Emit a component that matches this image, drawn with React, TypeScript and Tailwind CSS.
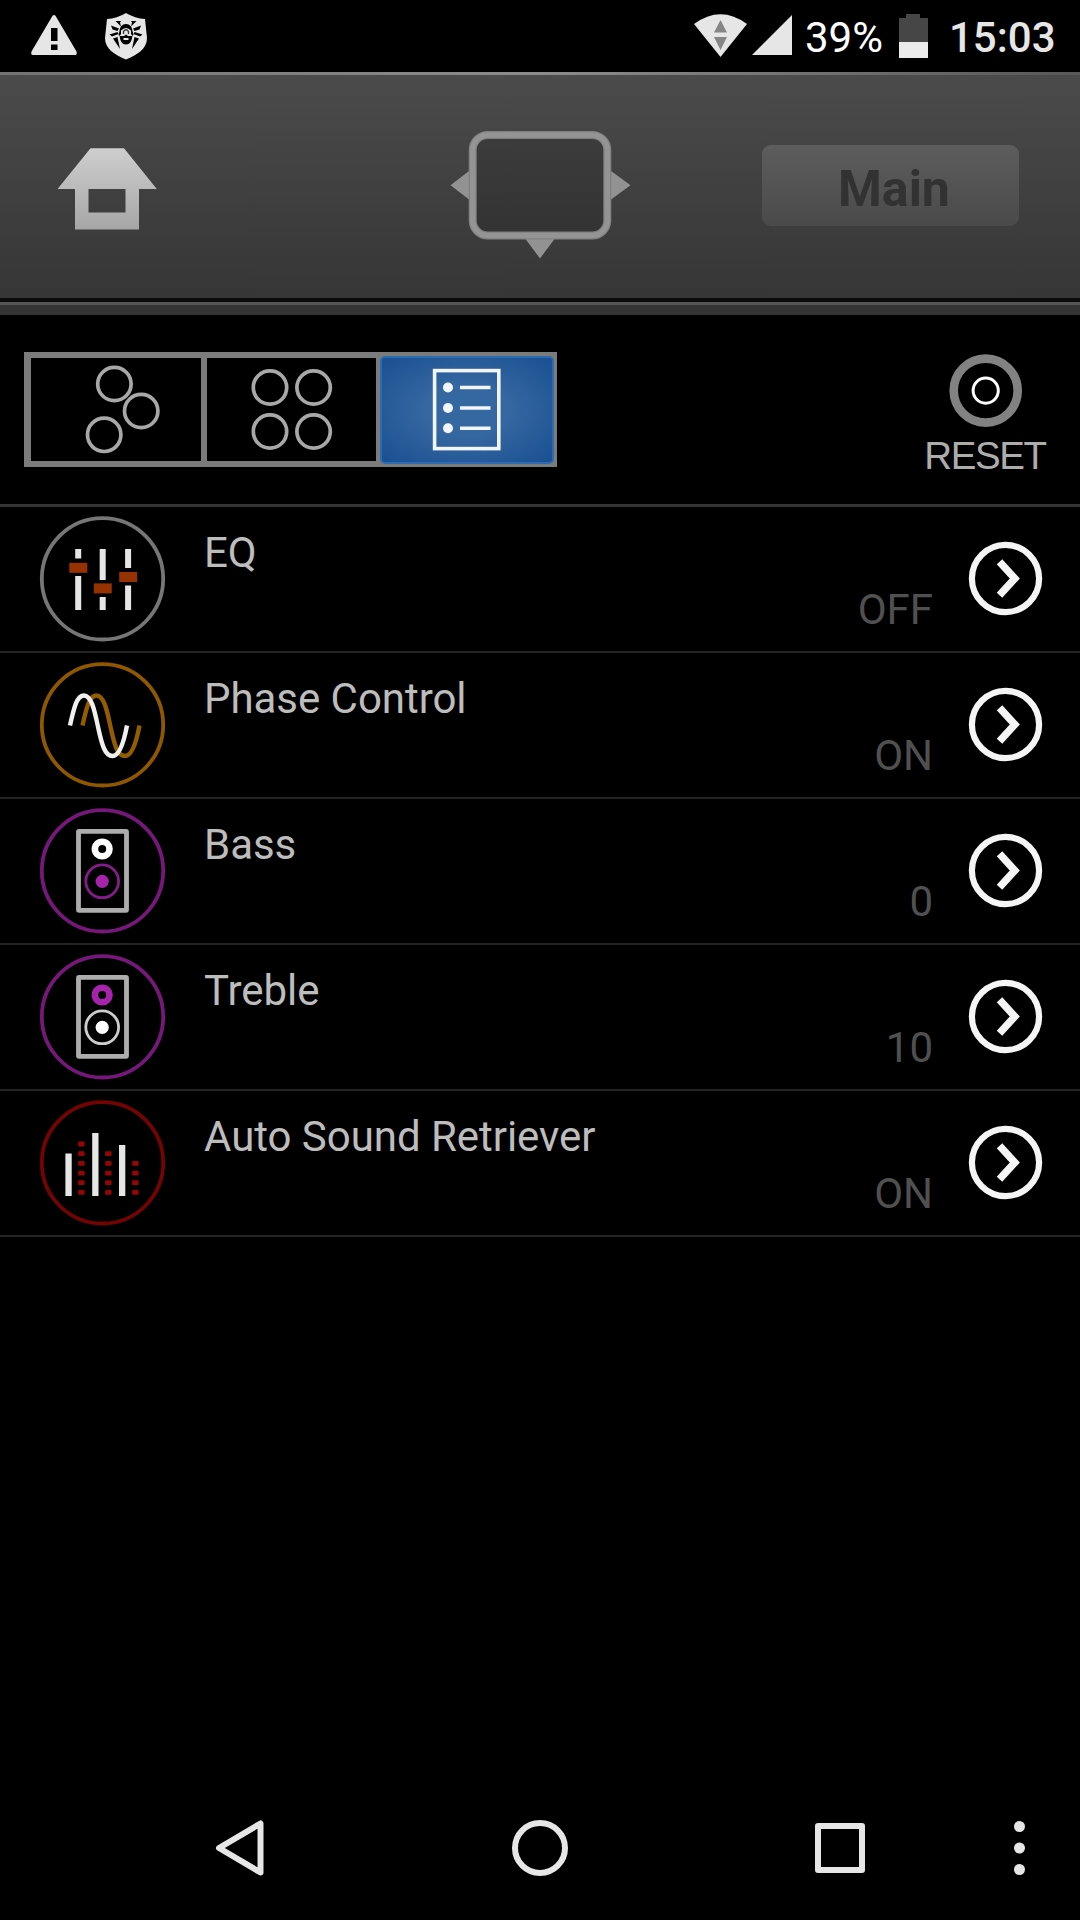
import React, { useState } from 'react';

const ring = 'fill-none [stroke-width:3.8]';

const EqIcon = () => (
  <svg width="128" height="128" viewBox="0 0 128 128">
    <circle cx="64.5" cy="63.8" r="60.7" className={`${ring} stroke-[#767676]`} />
    <g fill="#e6e6e6">
      <rect x="37.2" y="34" width="6" height="9.5" />
      <rect x="37.2" y="61" width="6" height="34" />
      <rect x="61.7" y="34" width="6" height="31" />
      <rect x="61.7" y="82" width="6" height="13" />
      <rect x="87.1" y="34" width="6" height="19" />
      <rect x="87.1" y="70.5" width="6" height="24.5" />
    </g>
    <g fill="#963200">
      <rect x="31.3" y="47.8" width="18" height="10" />
      <rect x="55.8" y="68.4" width="18" height="10" />
      <rect x="81.2" y="57" width="18" height="10" />
    </g>
  </svg>
);

const PhaseIcon = () => (
  <svg width="128" height="128" viewBox="0 0 128 128" fill="none" strokeWidth="4.4">
    <circle cx="64.5" cy="63.8" r="60.7" className={`${ring} stroke-[#8f5800]`} />
    <path stroke="#945c00" d="M44.5 64.5C48.5 46 51.5 34.5 58.5 34.5C66.5 34.5 69.5 52 73 68C76.5 84 79.5 95 87 95C93.5 95 98 83 101.5 64.5" />
    <path stroke="#f0f0f0" d="M32 64.5C36 46 39 34.5 46 34.5C54 34.5 57 52 60.5 68C64 84 67 95 74.5 95C81 95 85.5 83 89 64.5" />
  </svg>
);

const SpeakerIcon = ({ top, bottom }: { top: string; bottom: string }) => (
  <svg width="128" height="128" viewBox="0 0 128 128" fill="none">
    <circle cx="64.5" cy="63.8" r="60.7" className={`${ring} stroke-[#76187a]`} />
    <rect x="40.5" y="24.3" width="48" height="79" rx="0.5" stroke="#adadad" strokeWidth="4.8" />
    <circle cx="64.2" cy="42" r="7.3" stroke={top} strokeWidth="6.6" />
    <circle cx="64.2" cy="74.3" r="16.4" stroke={bottom} strokeWidth="2.8" strokeOpacity="0.8" />
    <circle cx="64.2" cy="74.3" r="6.6" fill={bottom} />
  </svg>
);

const RetrieverIcon = () => {
  const dots = [93.7, 84, 74.5, 64.7, 55, 45.3];
  const columns = [
    { x: 40.2, count: 6 },
    { x: 67.2, count: 5 },
    { x: 94.2, count: 4 },
  ];
  return (
    <svg width="128" height="128" viewBox="0 0 128 128">
      <circle cx="64.5" cy="63.8" r="60.7" className={`${ring} stroke-[#740303]`} />
      <g fill="#e6e6e6">
        <rect x="27.4" y="54.5" width="6.3" height="42.5" />
        <rect x="54.2" y="34" width="6.3" height="63" />
        <rect x="81" y="46" width="6.3" height="51" />
      </g>
      {columns.map((column) =>
        dots.slice(0, column.count).map((y) => (
          <rect key={`${column.x}-${y}`} x={column.x} y={y - 2.7} width="6.4" height="4.8" rx="0.8" fill="#960505" />
        ))
      )}
    </svg>
  );
};

const StatusBar = () => (
  <div className="flex h-[72px] items-center bg-black text-[42px] leading-[49px]">
    <svg className="ml-[30px]" width="120" height="72" viewBox="30 0 120 72" fill="#e6e6e6">
      <path fillRule="evenodd" d="M52.5 15.8Q54 14 55.5 15.8L76.5 51.5Q77.500 55 75 55H33Q30.5 55 31.5 51.5ZM51 28V41H57.5V28ZM51 44.5V50H57.5V44.5Z" />
      <path d="M126 13Q135 18.5 145 19L147 38C147 49 137 55 126 59.5C115 55 105 49 105 38L107 19Q117 18.5 126 13Z" />
      {/* Spider: head, then the legs on either side */}
      <path fill="#000" d="M126 24C130 24 132 27 132.5 31L133.500 35L132.300 36C132 41 129.500 44.500 126 44.500C122.500 44.500 120 41 119.700 36L118.500 35L119.500 31C120 27 122 24 126 24Z" />
      <path d="M121 30.500Q126 25.500 131 30.500V34L132.500 36H128L126 34.500L124 36H119.500L121 34ZM123.500 38H128.500V40H123.500Z" />
      <path fill="none" stroke="#333" strokeWidth="1.300" d="M123.500 34V31.500Q126 28 128.500 31.500V34" />
      <g fill="#000">
        <path d="M115.5 21H121L120 22.500L121 26.500ZM111 25.500L119 28.500L117.500 31L112.500 29.500ZM109.500 34.500L117.500 32L118.500 34L112 36.500ZM113 38.500L117.500 37L120 49Z" />
        <path d="M136.500 21H131L132 22.500L131 26.500ZM141 25.500L133 28.500L134.500 31L139.500 29.500ZM142.500 34.500L134.500 32L133.500 34L140 36.500ZM139 38.500L134.500 37L132 49Z" />
      </g>
    </svg>
    <svg className="ml-auto" width="100" height="72" viewBox="693 0 100 72" fill="#e6e6e6">
      <path d="M694 24Q720.5 4.5 747 24L720.5 57Z" />
      <path fill="#868686" d="M720.5 20L727 32.5H714ZM720.5 50L727 37H714Z" />
      <path d="M792 15V55H752Z" />
    </svg>
    <span className="ml-[12px] w-[80px] whitespace-nowrap pt-[2px] text-white">39%</span>
    <svg className="ml-[14px]" width="29" height="72" viewBox="899 0 29 72">
      <path fill="#464646" d="M899 18H906V14H920V18H928V42H899Z" />
      <path fill="#ebebeb" d="M899 42H928V58H899Z" />
    </svg>
    <span className="ml-[21px] w-[131px] pt-[2px] font-medium text-[#e6e6e6]">15:03</span>
  </div>
);

const Header = () => (
  <div>
    <div className="h-[3px] bg-gradient-to-r from-[#737373] via-[#8c8c8c] to-[#585858]"></div>
    <div className="flex h-[223px] items-start bg-gradient-to-b from-[#4b4b4b] to-[#363636]">
      <svg className="ml-[56px] mt-[72px]" width="102" height="84" viewBox="56 147 102 84">
        <defs>
          <linearGradient id="home" x1="0" y1="0" x2="0" y2="1">
            <stop offset="0" stopColor="#cecece" />
            <stop offset="1" stopColor="#a6a6a6" />
          </linearGradient>
        </defs>
        <path fill="url(#home)" fillRule="evenodd" d="M90.5 148.3H124L156.8 189H139V229.6H75V189H57.5ZM88.5 189V212.5H125.5V189Z" />
      </svg>
      <svg className="ml-[290px] mt-[50px]" width="184" height="140" viewBox="448 125 184 140">
        <defs>
          <linearGradient id="panel" x1="0" y1="0" x2="0" y2="1">
            <stop offset="0" stopColor="#3c3c3c" />
            <stop offset="1" stopColor="#333333" />
          </linearGradient>
        </defs>
        <path fill="#929292" d="M450.5 185.3L469 171V199.500ZM630.5 185.3L611 171V199.500ZM540 258.500L525.500 239H554.500Z" />
        <rect x="472.7" y="135" width="134.6" height="100.500" rx="15" fill="url(#panel)" stroke="#808080" strokeWidth="8" />
        <rect x="472.7" y="135" width="134.6" height="100.500" rx="15" fill="none" stroke="#949494" strokeWidth="5.5" />
      </svg>
      <button className="ml-[130px] mt-[70px] h-[81px] w-[257px] rounded-[9px] bg-gradient-to-b from-[#5d5d5d] to-[#4a4a4a] pl-[7px] pt-[6px] text-[50px] font-bold leading-[58px] text-[#323232]">
        Main
      </button>
    </div>
    <div className="h-[4px] bg-[#0b0b0b]"></div>
    <div className="h-[3px] bg-[#555555]"></div>
    <div className="h-[10px] bg-[#343434]"></div>
  </div>
);

const Toolbar = () => {
  const [view, setView] = useState('list');
  const active = 'rounded-[5px] border-2 border-[#2d6cb4] bg-[radial-gradient(#3567a1_35%,#285c99_65%,#195092)]';

  return (
    <div className="flex h-[192px] items-start border-b-[3px] border-[#333333] bg-black">
      <div className="ml-[24px] mt-[37px] flex h-[115px] w-[533px] bg-[#7b7b7b]">
        <button onClick={() => setView('free')} className={`ml-[7px] mt-[6px] h-[103px] w-[170px] ${view === 'free' ? active : 'bg-black'}`}>
          <svg width="170" height="103" viewBox="31 358 170 103" fill="none" stroke="#a8a8a8" strokeWidth="3.7">
            <circle cx="114.4" cy="384" r="16.7" />
            <circle cx="141.2" cy="411" r="16.7" />
            <circle cx="104.2" cy="434.8" r="16.7" />
          </svg>
        </button>
        <button onClick={() => setView('grid')} className={`ml-[6px] mt-[6px] h-[103px] w-[169px] ${view === 'grid' ? active : 'bg-black'}`}>
          <svg width="169" height="103" viewBox="207 358 169 103" fill="none" stroke="#a8a8a8" strokeWidth="3.7">
            <circle cx="270" cy="387.5" r="16.7" />
            <circle cx="313.6" cy="387.5" r="16.7" />
            <circle cx="270" cy="431.5" r="16.7" />
            <circle cx="313.6" cy="431.5" r="16.7" />
          </svg>
        </button>
        <button onClick={() => setView('list')} className={`ml-[4px] mt-[4px] h-[108px] w-[174px] ${view === 'list' ? active : 'bg-black'}`}>
          <svg width="170" height="104" viewBox="382 358 170 104" fill="none" stroke="#f2f5fa" strokeWidth="3.6">
            <rect x="434.6" y="370.6" width="64.2" height="78" />
            <path d="M460 387.5H490.5M460 408H490.5M460 428.3H490.5" />
            <g fill="#f2f5fa" stroke="none">
              <circle cx="448" cy="387.5" r="5" />
              <circle cx="448" cy="408" r="5" />
              <circle cx="448" cy="428.3" r="5" />
            </g>
          </svg>
        </button>
      </div>
      <button className="ml-auto mr-[24px] mt-[37px] flex w-[140px] flex-col items-center text-[#adadad]">
        <svg width="76" height="76" viewBox="0 0 76 76" fill="none">
          <circle cx="37.7" cy="38.6" r="32" stroke="#828282" strokeWidth="8.6" />
          <circle cx="37.7" cy="38.6" r="12.6" stroke="#ffffff" strokeWidth="3" />
        </svg>
        <span className="mt-[6px] pr-[2px] font-['Liberation_Sans',sans-serif] text-[38.5px] leading-[43px] tracking-[-1.4px]">RESET</span>
      </button>
    </div>
  );
};

const controls = [
  { name: 'EQ', value: 'OFF', icon: <EqIcon /> },
  { name: 'Phase Control', value: 'ON', icon: <PhaseIcon /> },
  { name: 'Bass', value: '0', icon: <SpeakerIcon top="#ffffff" bottom="#a524ab" /> },
  { name: 'Treble', value: '10', icon: <SpeakerIcon top="#a524ab" bottom="#ffffff" /> },
  { name: 'Auto Sound Retriever', value: 'ON', icon: <RetrieverIcon /> },
];

const App = () => {
  return (
    <div className="flex h-[1920px] w-[1080px] flex-col overflow-hidden bg-black font-['Roboto',sans-serif]">
      <StatusBar />
      <Header />
      <Toolbar />

      {/* Control list */}
      <div className="flex-1">
        {controls.map((control) => (
          <div key={control.name} className="flex h-[146px] items-center border-b-2 border-[#242424] pl-[38px] pr-[35px] text-[42px] leading-[49px]">
            {control.icon}
            <div className="ml-[38px] flex h-full flex-1 flex-col justify-between pb-[17px] pt-[21px]">
              <span className="text-[#bdbdbd] tracking-[-0.04px]">{control.name}</span>
              <span className="text-right text-[#505050]">{control.value}</span>
            </div>
            <svg className="ml-[32px]" width="80" height="80" viewBox="0 0 80 80" fill="none" stroke="#f5f5f5">
              <circle cx="40.5" cy="39.5" r="33.6" strokeWidth="6.2" />
              <path d="M34.5 22.8L49.8 39.5L34.5 56.2" strokeWidth="7.5" />
            </svg>
          </div>
        ))}
      </div>

      {/* Navigation bar */}
      <div className="flex h-[144px] items-center">
        <svg className="ml-[212px]" width="56" height="64" viewBox="0 0 56 64" fill="none" stroke="#e6e6e6" strokeWidth="6" strokeLinejoin="round">
          <path d="M7 32L48.5 7.5V56.5Z" />
        </svg>
        <svg className="ml-[240px]" width="64" height="64" viewBox="0 0 64 64" fill="none" stroke="#e6e6e6" strokeWidth="6">
          <circle cx="32" cy="32" r="25" />
        </svg>
        <svg className="ml-[236px]" width="64" height="64" viewBox="0 0 64 64" fill="none" stroke="#e6e6e6" strokeWidth="6" strokeLinejoin="round">
          <rect x="10" y="10" width="44" height="44" />
        </svg>
        <svg className="ml-[135px]" width="24" height="64" viewBox="0 0 24 64" fill="#e6e6e6">
          <circle cx="12.5" cy="10.5" r="5.5" />
          <circle cx="12.5" cy="32" r="5.5" />
          <circle cx="12.5" cy="53.5" r="5.5" />
        </svg>
      </div>
    </div>
  );
};

export default App;
